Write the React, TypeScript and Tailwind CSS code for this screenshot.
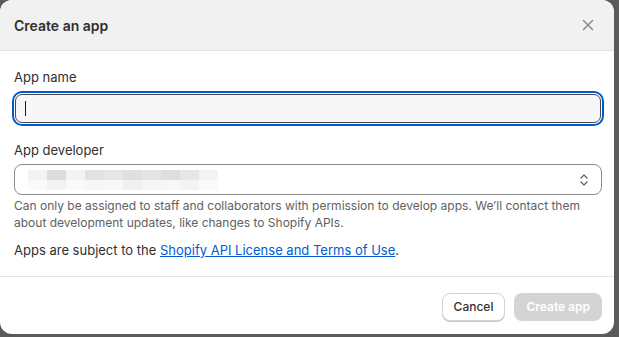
import React from "react";

export default function App() {
  const top = ["bg-[#f3f3f3]", "bg-[#dcdcdc]", "bg-[#f3f3f3]", "bg-[#e2e2e2]", "bg-[#e6e6e6]", "bg-[#e0e0e0]", "bg-[#e4e4e4]", "bg-[#dedede]", "bg-[#e6e6e6]", "bg-[#f4f4f4]"];
  const bot = ["bg-[#fafafa]", "bg-[#f2f2f2]", "bg-[#fafafa]", "bg-[#f6f6f6]", "bg-[#f7f7f7]", "bg-[#f0f0f0]", "bg-[#f5f5f5]", "bg-[#f7f7f7]", "bg-[#f3f3f3]", "bg-[#fafafa]"];
  return (
    <div
      className="w-[619px] h-[337px] bg-[#5a5a5a] overflow-hidden"
      style={{ fontFamily: "Inter, 'Noto Sans', sans-serif" }}
    >
      <div className="w-[614px] h-[334px] bg-white rounded-[12px] overflow-hidden flex flex-col">
        <div className="h-[51px] bg-[#f1f1f1] border-b border-[#e3e3e3] flex items-center justify-between pl-[14px] pr-[20px] shrink-0">
          <div className="text-[14px] font-semibold text-[#303030]">Create an app</div>
          <svg width="12" height="12" viewBox="0 0 12 12" className="text-[#8a8a8a]">
            <path d="M1.5 1.5L10.5 10.5M10.5 1.5L1.5 10.5" stroke="currentColor" strokeWidth="1.5" strokeLinecap="round" />
          </svg>
        </div>
        <div className="flex-1 pl-[14px] pr-[12px] pt-[17px] text-[13px] text-[#303030]">
          <div className="leading-[18px]">App name</div>
          <div className="mt-[5px] -mx-[2px] h-[35px] rounded-[10px] border-2 border-[#005bd3] p-[1px]">
            <div className="h-full rounded-[7px] border border-[#4a4a4a] bg-[#f7f7f7] flex items-center pl-[9px]">
              <div className="w-[1px] h-[15px] bg-[#1a1a1a]" />
            </div>
          </div>
          <div className="mt-[15px] leading-[18px]">App developer</div>
          <div className="mt-[5px] h-[31px] rounded-[8px] border border-[#8a8a8a] flex items-center justify-between pl-[13px] pr-[12px]">
            <div className="flex flex-col h-[20px]">
              <div className="flex h-[10px]">
                {top.map((b, i) => (
                  <div key={i} className={`w-[19px] h-full ${b}`} />
                ))}
              </div>
              <div className="flex h-[10px]">
                {bot.map((b, i) => (
                  <div key={i} className={`w-[19px] h-full ${b}`} />
                ))}
              </div>
            </div>
            <svg width="10" height="14" viewBox="0 0 10 14" className="text-[#616161]">
              <path d="M2 5L5 2L8 5M2 9L5 12L8 9" stroke="currentColor" strokeWidth="1.2" fill="none" strokeLinecap="round" strokeLinejoin="round" />
            </svg>
          </div>
          <div className="mt-[2px] text-[12px] text-[#616161] leading-[17px]">
            Can only be assigned to staff and collaborators with permission to develop apps. We’ll contact them about development updates, like changes to Shopify APIs.
          </div>
          <div className="mt-[11px] leading-[17px]">
            Apps are subject to the{" "}
            <span className="text-[#005bd3] underline">Shopify API License and Terms of Use</span>.
          </div>
        </div>
        <div className="h-[58px] border-t border-[#e3e3e3] flex items-start justify-end gap-[9px] pr-[12px] pt-[16px] shrink-0">
          <div className="h-[28px] px-[11px] rounded-[8px] border border-[#d4d4d4] bg-white shadow-[0_1px_0_#c9c9c9] flex items-center text-[12px] font-medium text-[#303030]">
            Cancel
          </div>
          <div className="h-[28px] px-[12px] rounded-[8px] bg-[#d4d4d4] flex items-center text-[12px] font-semibold text-white">
            Create app
          </div>
        </div>
      </div>
    </div>
  );
}
